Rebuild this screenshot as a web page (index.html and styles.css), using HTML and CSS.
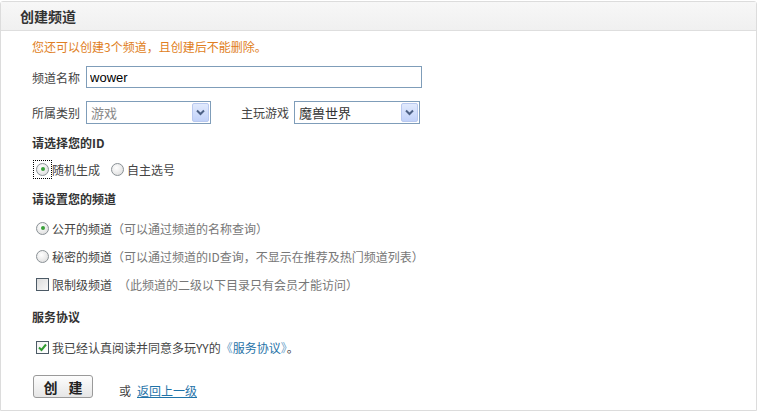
FILE: index.html
```html
<!DOCTYPE html>
<html lang="zh-CN">
<head>
<meta charset="utf-8">
<title>创建频道</title>
<link rel="stylesheet" href="styles.css">
</head>
<body>
<div class="panel">
  <div class="panel-head">创建频道</div>
  <div class="panel-body">
    <div class="row notice">您还可以创建3个频道，且创建后不能删除。</div>

    <div class="row name-row">
      <span class="label">频道名称</span>
      <input class="text-input" type="text" value="wower">
    </div>

    <div class="row cat-row">
      <span class="label">所属类别</span>
      <span class="select sel-a"><span class="sel-text muted">游戏</span><span class="sel-btn"><svg width="9" height="7" viewBox="0 0 9 7"><path d="M1 1.5 L4.5 5 L8 1.5" fill="none" stroke="#4d6185" stroke-width="2"/></svg></span></span>
      <span class="label label-game">主玩游戏</span>
      <span class="select sel-b"><span class="sel-text">魔兽世界</span><span class="sel-btn"><svg width="9" height="7" viewBox="0 0 9 7"><path d="M1 1.5 L4.5 5 L8 1.5" fill="none" stroke="#4d6185" stroke-width="2"/></svg></span></span>
    </div>

    <div class="row title t-id">请选择您的ID</div>
    <div class="row radio-row">
      <span class="focus"><span class="radio on"></span></span><span class="opt">随机生成</span>
      <span class="radio r2"></span><span class="opt">自主选号</span>
    </div>

    <div class="row title t-ch">请设置您的频道</div>
    <div class="row opt-row r-pub"><span class="radio on ind"></span><span class="opt">公开的频道</span><span class="hint">（可以通过频道的名称查询）</span></div>
    <div class="row opt-row r-sec"><span class="radio ind"></span><span class="opt">秘密的频道</span><span class="hint">（可以通过频道的ID查询，不显示在推荐及热门频道列表）</span></div>
    <div class="row opt-row r-lim"><span class="check ind"></span><span class="opt">限制级频道</span><span class="hint hint-gap">（此频道的二级以下目录只有会员才能访问）</span></div>

    <div class="row title t-srv">服务协议</div>
    <div class="row opt-row r-agree"><span class="check ind on"><svg width="11" height="11" viewBox="0 0 11 11"><path d="M2 5.5 L4.5 8 L9 2.5" fill="none" stroke="#2f9a2f" stroke-width="2"/></svg></span><span class="opt">我已经认真阅读并同意多玩YY的<span class="br">《</span><a class="agree-link" href="#">服务协议</a><span class="br">》</span>。</span></div>

    <div class="row btn-row">
      <button class="btn" type="button">创 建</button>
      <span class="or">或</span>
      <a class="back" href="#">返回上一级</a>
    </div>
  </div>
</div>
</body>
</html>
```

FILE: styles.css
```css
* { box-sizing: border-box; }
html, body { margin: 0; padding: 0; background: #fff; }
body {
  font-family: "Noto Sans CJK SC", "Liberation Sans", sans-serif;
  font-size: 12px;
  color: #444;
}
.panel {
  margin-top: 1px;
  width: 757px;
  height: 410px;
  border: 1px solid #dcdcdc;
  border-radius: 3px 3px 0 0;
}
.panel-head {
  height: 29px;
  padding-left: 19px;
  display: flex;
  align-items: center;
  font-size: 14px;
  font-weight: bold;
  color: #333;
  background: linear-gradient(#f7f7f7, #f0f0f0);
  border-bottom: 1px solid #dedede;
}
.panel-body { padding-left: 31px; }
.row { display: flex; align-items: center; height: 20px; }
.notice { margin-top: 6px; height: 18px; color: #e07e22; }
.name-row { margin-top: 11px; height: 22px; }
.label { color: #444; margin-right: 6px; }
.text-input {
  width: 336px;
  height: 22px;
  border: 1px solid #7f9db9;
  padding: 0 3px;
  font-family: "Liberation Sans", sans-serif;
  font-size: 13px;
  color: #000;
  outline: none;
}
.cat-row { margin-top: 13px; height: 23px; }
.select {
  position: relative;
  display: flex;
  align-items: center;
  height: 23px;
  border: 1px solid #7f9db9;
  background: #fff;
  padding-left: 4px;
  font-size: 13px;
  color: #333;
}
.sel-a { width: 125px; }
.sel-b { width: 126px; }
.label-game { margin-left: 30px; margin-right: 5px; }
.muted { color: #888; }
.sel-btn {
  position: absolute;
  right: 1px;
  top: 1px;
  width: 17px;
  height: 19px;
  border: 1px solid #b9c9ef;
  border-radius: 2px;
  background: linear-gradient(#e1eafd, #c2d2f9);
  display: flex;
  align-items: center;
  justify-content: center;
}
.title { font-weight: bold; color: #333; }
.t-id { margin-top: 8px; }
.radio-row { margin-top: 7px; }
.focus {
  display: inline-flex;
  align-items: center;
  justify-content: center;
  width: 19px;
  height: 19px;
  border: 1px dotted #000;
  margin-left: 1px;
}
.radio {
  position: relative;
  display: inline-block;
  width: 13px;
  height: 13px;
  border-radius: 50%;
  border: 1px solid #8a9196;
  background: radial-gradient(circle at 40% 35%, #fff, #e4e4e4 70%, #d0d0d0);
  flex: none;
}
.radio.on::after {
  content: "";
  position: absolute;
  left: 3.5px;
  top: 3.5px;
  width: 4px;
  height: 4px;
  border-radius: 50%;
  background: #3aa03a;
}
.r2 { margin-left: 11px; margin-right: 3px; }
.opt { color: #444; }
.t-ch { margin-top: 9px; }
.opt-row { margin-top: 10px; }
.r-sec, .r-lim { margin-top: 8px; }
.ind { margin-left: 4px; margin-right: 3px; }
.hint { color: #777; }
.hint-gap { margin-left: 6px; }
.check {
  display: inline-flex;
  align-items: center;
  justify-content: center;
  width: 13px;
  height: 13px;
  border: 1px solid #4c5a66;
  background: linear-gradient(135deg, #dcdcdc, #f8f8f8);
  flex: none;
}
.check.on { background: linear-gradient(135deg, #f2f2f2, #fff); }
.t-srv { margin-top: 12px; }
.r-agree { margin-top: 11px; }
.br { color: #6aa0c8; }
.agree-link { color: #1f73a8; text-decoration: none; }
.btn-row { margin-top: 18px; height: 23px; align-items: center; }
.btn {
  width: 60px;
  height: 23px;
  margin-left: 1px;
  border: 1px solid #9a9a9a;
  border-radius: 3px;
  background: linear-gradient(#fdfdfd, #e6e6e6);
  font-family: "Noto Sans CJK SC", sans-serif;
  font-size: 14px;
  font-weight: bold;
  color: #222;
  padding: 0 0 0 3px;
  letter-spacing: 3px;
  word-spacing: 2px;
}
.or { margin-left: 26px; color: #444; align-self: flex-end; line-height: 14px; }
.back { margin-left: 6px; color: #1f73a8; align-self: flex-end; line-height: 14px; }
```
